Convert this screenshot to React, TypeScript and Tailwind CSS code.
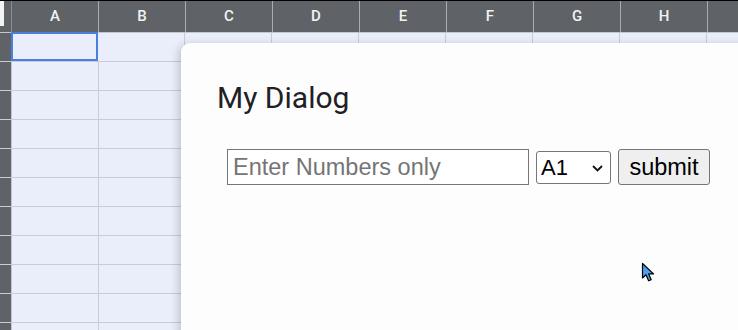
import React from "react";

const cols = ["A", "B", "C", "D", "E", "F", "G", "H", ""];
const rows = Array.from({ length: 11 }, (_, i) => i);

export default function App() {
  return (
    <div className="relative w-[738px] h-[330px] overflow-hidden bg-[#eaeefb]" style={{ fontFamily: "Roboto, 'Liberation Sans', sans-serif" }}>
      {/* header */}
      <div className="flex h-[33px] border-t border-t-black border-b border-b-[#c4c7cf] bg-[#5f6368]">
        <div className="relative w-[12px] shrink-0 border-r border-r-[#8a8d92]">
          <div className="absolute left-0 top-0 w-[4px] h-[25px] bg-[#f3f3f3]" />
        </div>
        {cols.map((c, i) => (
          <div
            key={i}
            className="w-[87px] shrink-0 border-r border-r-[#a9acb1] flex items-center justify-center text-[15px] font-medium text-[#f1f3f4]"
          >
            {c}
          </div>
        ))}
      </div>
      {/* body */}
      {rows.map((r) => (
        <div key={r} className="flex h-[29px] border-b border-b-[#c9ccd6]">
          <div className="w-[12px] shrink-0 bg-[#5f6368] border-r border-r-[#c4c7cf]" />
          {cols.map((_, i) => (
            <div
              key={i}
              className={
                r === 0 && i === 0
                  ? "w-[87px] shrink-0 border-2 border-[#4a7fe0] -mt-px -ml-px"
                  : "w-[87px] shrink-0 border-r border-r-[#c9ccd6]"
              }
            />
          ))}
        </div>
      ))}

      {/* dialog */}
      <div className="absolute left-[181px] top-[43px] w-[600px] h-[320px] rounded-[9px] bg-[#fdfdfd] shadow-[-2px_2px_10px_rgba(0,0,0,0.2)] pl-[36px] pt-[37px]">
        <div className="text-[30px] leading-[36px] text-[#202124]" style={{ fontFamily: "Roboto, 'Open Sans', sans-serif" }}>
          My Dialog
        </div>
        <div className="flex items-center gap-[7px] ml-[10px] mt-[33px]" style={{ fontFamily: "Arial, 'Liberation Sans', sans-serif" }}>
          <input
            type="text"
            placeholder="Enter Numbers only"
            className="w-[302px] h-[36px] border border-[#767676] bg-white px-[5px] text-[23.5px] text-black placeholder:text-[#757575] outline-none"
          />
          <div className="relative w-[75px] h-[33px]">
            <select
              defaultValue="A1"
              className="appearance-none w-full h-full border border-[#767676] rounded-[3px] bg-white text-[22px] leading-[31px] text-black pl-[4px] pb-[1px]"
            >
              <option>A1</option>
              <option>A2</option>
            </select>
            <svg className="absolute left-[56px] top-[14px] pointer-events-none" width="11" height="7" viewBox="0 0 11 7">
              <path d="M1 1 L5.5 5.5 L10 1" fill="none" stroke="#111" strokeWidth="1.8" />
            </svg>
          </div>
          <button className="w-[92px] h-[36px] border border-[#767676] rounded-[3px] bg-[#efefef] text-[23.5px] text-black">
            submit
          </button>
        </div>
      </div>

      {/* cursor */}
      <svg className="absolute left-[641px] top-[262px]" width="16" height="22" viewBox="0 0 16 22">
        <path d="M1.5 1.5 L1.5 16 L5 12.8 L7.6 18.8 L10.2 17.7 L7.7 11.9 L12.5 11.9 Z" fill="#4a9ff0" stroke="#000" strokeWidth="1.2" strokeLinejoin="round" />
      </svg>
    </div>
  );
}
